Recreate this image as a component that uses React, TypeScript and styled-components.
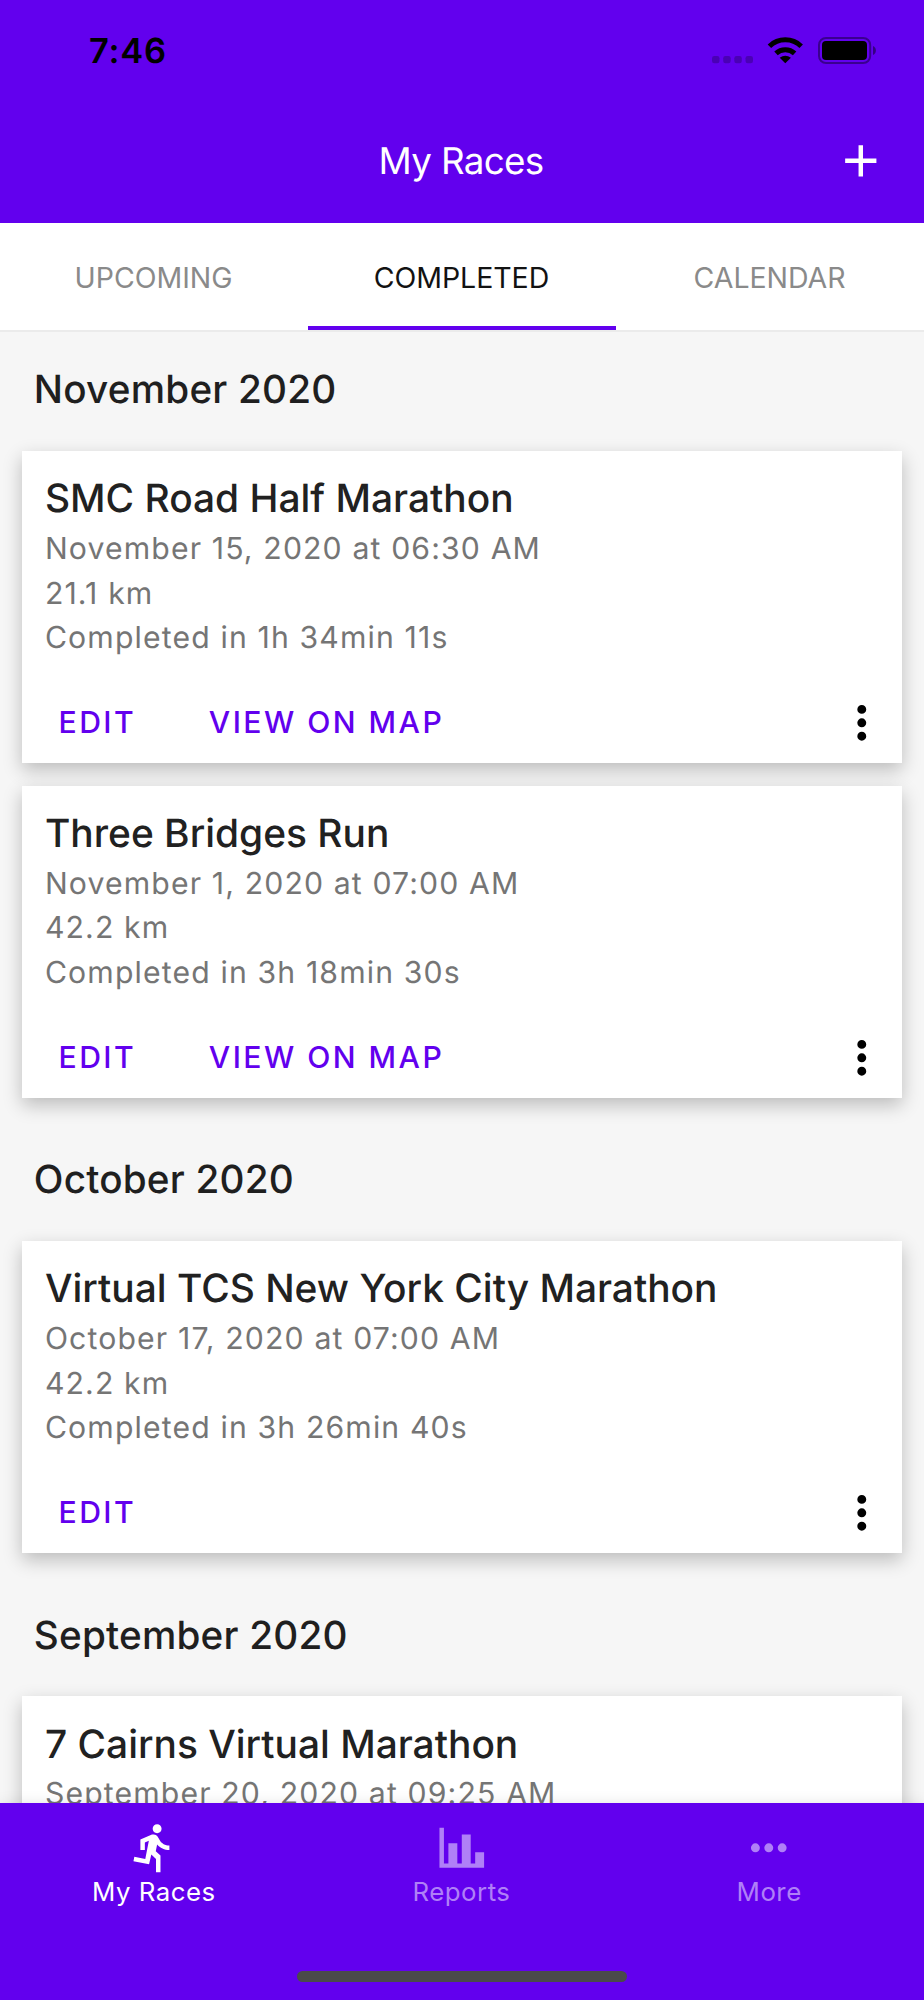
import React from 'react';
import styled, { createGlobalStyle } from 'styled-components';

const PRIMARY = '#6200ee';
const SHADOW = '0 6.7px 17.9px rgba(0, 0, 0, 0.24)';

const GlobalStyle = createGlobalStyle`
  * { box-sizing: border-box; }
  body {
    margin: 0;
    font-family: Inter, "Liberation Sans", sans-serif;
    text-rendering: geometricPrecision;
    -webkit-font-smoothing: antialiased;
  }
  button {
    border: 0;
    padding: 0;
    background: none;
    font: inherit;
    color: inherit;
  }
`;

const Screen = styled.div`
  width: 924px;
  height: 2000px;
  display: flex;
  flex-direction: column;
  overflow: hidden;
  background: #f6f6f6;
`;

const Header = styled.header`
  flex: none;
  height: 223px;
  background: ${PRIMARY};
`;

const StatusBar = styled.div`
  height: 98px;
  padding: 3px 48px 0 89px;
  display: flex;
  align-items: center;
  justify-content: space-between;
  color: #000;
`;

const Time = styled.span`
  padding-top: 2px;
  font-size: 34.5px;
  font-weight: 600;
  letter-spacing: 0.8px;
`;

const StatusIcons = styled.div`
  display: flex;
  align-items: center;
`;

const AppBar = styled.div`
  height: 125px;
  padding: 0 36px 0 34px;
  display: grid;
  grid-template-columns: 54px 1fr 54px;
  align-items: center;
  color: #fff;
`;

const ScreenTitle = styled.h1`
  grid-column: 2;
  margin: 0;
  text-align: center;
  font-size: 36.8px;
  font-weight: 400;
  letter-spacing: -0.7px;
`;

const IconButton = styled.button`
  display: flex;
`;

const TabBar = styled.nav`
  flex: none;
  height: 109px;
  display: grid;
  grid-template-columns: repeat(3, 1fr);
  background: #fff;
  border-bottom: 2px solid #ebebeb;
`;

const Tab = styled.button<{ $active?: boolean }>`
  height: 107px;
  padding: 5px 1px 0 0;
  border-bottom: 4px solid ${(p) => (p.$active ? PRIMARY : 'transparent')};
  color: ${(p) => (p.$active ? '#121212' : '#8a8a8a')};
  font-size: 28.5px;
  letter-spacing: -0.05px;
`;

const List = styled.main`
  flex: 1;
  min-height: 0;
  margin-top: -1.65px;
  overflow: hidden;
`;

const MonthTitle = styled.h2`
  margin: 0;
  height: 120.5px;
  padding-left: 33.8px;
  color: #1f1f1f;
  font-size: 38.7px;
  font-weight: 500;
  line-height: 120.5px;
  letter-spacing: 0.2px;
`;

const Card = styled.article`
  height: 312.5px;
  margin: 0 22.3px 22.3px;
  padding-top: 21.3px;
  display: flex;
  flex-direction: column;
  background: #fff;
  box-shadow: ${SHADOW};
`;

const RaceName = styled.h3`
  margin: 0;
  padding-left: 22.7px;
  color: #212121;
  font-size: 38.9px;
  font-weight: 500;
  line-height: 54.8px;
`;

const Detail = styled.p`
  margin: 0;
  padding-left: 22.6px;
  color: #757575;
  font-size: 30.2px;
  line-height: 44.64px;
  letter-spacing: 1.14px;
`;

const Actions = styled.div`
  height: 80.4px;
  margin-top: auto;
  padding: 0 13.3px 0 36.2px;
  display: flex;
  align-items: center;
  gap: 72.6px;
`;

const ActionButton = styled.button`
  padding-bottom: 2px;
  color: ${PRIMARY};
  font-size: 30.2px;
  font-weight: 500;
  letter-spacing: 2.45px;
`;

const MenuButton = styled(IconButton)`
  margin-left: auto;
  color: #000;
`;

const BottomNav = styled.nav`
  flex: none;
  position: relative;
  height: 197px;
  padding-bottom: 18px;
  display: flex;
  flex-direction: column;
  align-items: center;
  justify-content: space-between;
  background: ${PRIMARY};
  box-shadow: ${SHADOW};
`;

const NavItems = styled.div`
  width: 100%;
  padding-right: 1px;
  display: grid;
  grid-template-columns: repeat(3, 1fr);
`;

const NavItem = styled.button<{ $active?: boolean }>`
  padding-top: 17.9px;
  display: flex;
  flex-direction: column;
  align-items: center;
  gap: 1.3px;
  color: ${(p) => (p.$active ? '#fff' : '#b080f7')};
  font-size: 25.8px;
  line-height: 31px;
  letter-spacing: 0.5px;
`;

const HomeIndicator = styled.div`
  width: 330px;
  height: 11px;
  border-radius: 5.5px;
  background: #4a4a4a;
`;

const Icon = ({ d }: { d: string }) => (
  <svg width="53.57" height="53.57" viewBox="0 0 24 24" fill="currentColor">
    <path d={d} />
  </svg>
);

const icons = {
  plus: 'M19,13H13V19H11V13H5V11H11V5H13V11H19V13Z',
  dotsVertical:
    'M12,16A2,2 0 0,1 14,18A2,2 0 0,1 12,20A2,2 0 0,1 10,18A2,2 0 0,1 12,16M12,10A2,2 0 0,1 14,12A2,2 0 0,1 12,14A2,2 0 0,1 10,12A2,2 0 0,1 12,10M12,4A2,2 0 0,1 14,6A2,2 0 0,1 12,8A2,2 0 0,1 10,6A2,2 0 0,1 12,4Z',
  dotsHorizontal:
    'M16,12A2,2 0 0,1 18,10A2,2 0 0,1 20,12A2,2 0 0,1 18,14A2,2 0 0,1 16,12M10,12A2,2 0 0,1 12,10A2,2 0 0,1 14,12A2,2 0 0,1 12,14A2,2 0 0,1 10,12M4,12A2,2 0 0,1 6,10A2,2 0 0,1 8,12A2,2 0 0,1 6,14A2,2 0 0,1 4,12Z',
  chart: 'M22,21H2V3H4V19H6V10H10V19H12V6H16V19H18V14H22V21Z',
  run: 'M13.5,5.5C14.59,5.5 15.5,4.58 15.5,3.5C15.5,2.38 14.59,1.5 13.5,1.5C12.39,1.5 11.5,2.38 11.5,3.5C11.5,4.58 12.39,5.5 13.5,5.5M9.89,19.38L10.89,15L13,17V23H15V15.5L12.89,13.5L13.5,10.5C14.79,12 16.79,13 19,13V11C17.09,11 15.5,10 14.69,8.58L13.69,7C13.29,6.38 12.69,6 12,6C11.69,6 11.5,6.08 11.19,6.08L6,8.28V13H8V9.58L9.79,8.88L8.19,17L3.29,16L2.89,18L9.89,19.38Z',
};

/* Signal dots, Wi-Fi fan and battery, drawn on one 164x27 strip. */
const StatusGlyphs = () => (
  <svg width="164" height="27" viewBox="0 0 164 27">
    <g fill="#000" fillOpacity="0.24">
      {[0, 11.2, 22.3, 33.5].map((x) => (
        <rect key={x} x={x} y="19" width="7.5" height="7.3" rx="2.2" />
      ))}
    </g>
    <g>
      <path d="M73.3 26.2 L67.7 20.7 Q73.3 16.6 78.9 20.7 Z" />
      <path d="M64 16.4 A13.4 13.4 0 0 1 82.6 16.4" fill="none" stroke="#000" strokeWidth="5" />
      <path d="M57.4 9.2 A23 23 0 0 1 89.2 9.2" fill="none" stroke="#000" strokeWidth="5" />
    </g>
    <rect x="107" y="1" width="51.2" height="25" rx="7" fill="none" stroke="#000" strokeOpacity="0.4" strokeWidth="2" />
    <rect x="110" y="4" width="45" height="19" rx="4" />
    <path d="M161 9 C164.8 10.5 164.8 16.5 161 18 Z" fillOpacity="0.45" />
  </svg>
);

type Race = { name: string; date: string; distance?: string; result?: string; map?: boolean };

const months: { title: string; races: Race[] }[] = [
  {
    title: 'November 2020',
    races: [
      {
        name: 'SMC Road Half Marathon',
        date: 'November 15, 2020 at 06:30 AM',
        distance: '21.1 km',
        result: 'Completed in 1h 34min 11s',
        map: true,
      },
      {
        name: 'Three Bridges Run',
        date: 'November 1, 2020 at 07:00 AM',
        distance: '42.2 km',
        result: 'Completed in 3h 18min 30s',
        map: true,
      },
    ],
  },
  {
    title: 'October 2020',
    races: [
      {
        name: 'Virtual TCS New York City Marathon',
        date: 'October 17, 2020 at 07:00 AM',
        distance: '42.2 km',
        result: 'Completed in 3h 26min 40s',
      },
    ],
  },
  {
    title: 'September 2020',
    races: [{ name: '7 Cairns Virtual Marathon', date: 'September 20, 2020 at 09:25 AM' }],
  },
];

const RaceCard = ({ race }: { race: Race }) => (
  <Card>
    <RaceName>{race.name}</RaceName>
    <Detail>{race.date}</Detail>
    {race.distance && <Detail>{race.distance}</Detail>}
    {race.result && (
      <>
        <Detail>{race.result}</Detail>
        <Actions>
          <ActionButton>EDIT</ActionButton>
          {race.map && <ActionButton>VIEW ON MAP</ActionButton>}
          <MenuButton aria-label="Options">
            <Icon d={icons.dotsVertical} />
          </MenuButton>
        </Actions>
      </>
    )}
  </Card>
);

export default function App() {
  return (
    <>
      <GlobalStyle />
      <Screen>
        <Header>
          <StatusBar>
            <Time>7:46</Time>
            <StatusIcons>
              <StatusGlyphs />
            </StatusIcons>
          </StatusBar>
          <AppBar>
            <ScreenTitle>My Races</ScreenTitle>
            <IconButton aria-label="Add">
              <Icon d={icons.plus} />
            </IconButton>
          </AppBar>
        </Header>
        <TabBar>
          <Tab>UPCOMING</Tab>
          <Tab $active>COMPLETED</Tab>
          <Tab>CALENDAR</Tab>
        </TabBar>
        <List>
          {months.map((month) => (
            <section key={month.title}>
              <MonthTitle>{month.title}</MonthTitle>
              {month.races.map((race) => (
                <RaceCard key={race.name} race={race} />
              ))}
            </section>
          ))}
        </List>
        <BottomNav>
          <NavItems>
            <NavItem $active>
              <Icon d={icons.run} />
              My Races
            </NavItem>
            <NavItem>
              <Icon d={icons.chart} />
              Reports
            </NavItem>
            <NavItem>
              <Icon d={icons.dotsHorizontal} />
              More
            </NavItem>
          </NavItems>
          <HomeIndicator />
        </BottomNav>
      </Screen>
    </>
  );
}
